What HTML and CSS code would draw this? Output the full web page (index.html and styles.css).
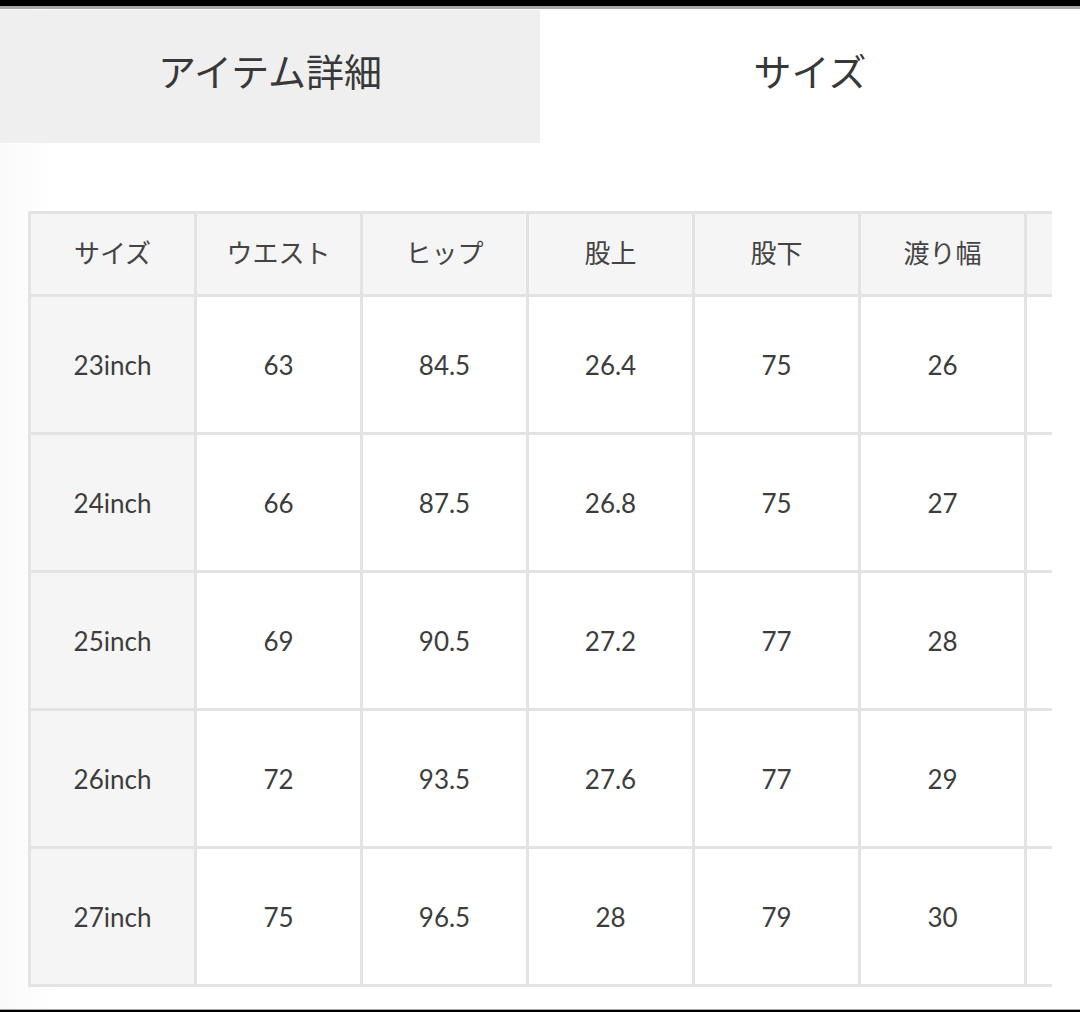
FILE: index.html
```html
<!DOCTYPE html>
<html lang="ja">
<head>
<meta charset="utf-8">
<link rel="stylesheet" href="styles.css">
</head>
<body>
<div class="page">
  <div class="topbar"></div>
  <div class="tabs">
    <div class="tab tab-inactive">アイテム詳細</div>
    <div class="tab tab-active">サイズ</div>
  </div>
  <div class="table-wrap">
    <table class="size-table">
      <colgroup>
        <col class="c"><col class="c"><col class="c"><col class="c"><col class="c"><col class="c"><col class="c">
      </colgroup>
      <thead>
        <tr class="head-row">
          <th>サイズ</th><th>ウエスト</th><th>ヒップ</th><th>股上</th><th>股下</th><th>渡り幅</th><th></th>
        </tr>
      </thead>
      <tbody>
        <tr><th>23inch</th><td>63</td><td>84.5</td><td>26.4</td><td>75</td><td>26</td><td></td></tr>
        <tr><th>24inch</th><td>66</td><td>87.5</td><td>26.8</td><td>75</td><td>27</td><td></td></tr>
        <tr><th>25inch</th><td>69</td><td>90.5</td><td>27.2</td><td>77</td><td>28</td><td></td></tr>
        <tr><th>26inch</th><td>72</td><td>93.5</td><td>27.6</td><td>77</td><td>29</td><td></td></tr>
        <tr><th>27inch</th><td>75</td><td>96.5</td><td>28</td><td>79</td><td>30</td><td></td></tr>
      </tbody>
    </table>
  </div>
  <div class="spacer"></div>
  <div class="bottombar"></div>
</div>
</body>
</html>
```
FILE: styles.css
```css
html, body {
  margin: 0;
  padding: 0;
}
body {
  background: #fff;
  font-family: "Lato", "Noto Sans CJK JP", sans-serif;
  color: #3a3a3a;
}
.page {
  height: 1012px;
  display: flex;
  flex-direction: column;
  background: linear-gradient(to right, #fafafa 0, #fdfdfd 40px, #fff 55px);
  overflow: hidden;
}
.topbar {
  height: 6px;
  background: #000;
  border-bottom: 3px solid #a9a9a9;
  flex: none;
}
.tabs {
  display: flex;
  height: 133px;
  margin-top: 1px;
  flex: none;
}
.tab {
  display: flex;
  align-items: center;
  justify-content: center;
  font-family: "Noto Sans CJK JP", sans-serif;
  font-size: 38px;
  color: #383838;
  padding-bottom: 14px;
  box-sizing: border-box;
}
.tab-inactive {
  width: 540px;
  background: #efefef;
}
.tab-active {
  flex: 1;
  background: #fff;
}
.table-wrap {
  margin-top: 68px;
  margin-left: 28px;
  width: 1024px;
  overflow: hidden;
  flex: none;
}
.size-table {
  border-collapse: collapse;
  table-layout: fixed;
  width: 1164px;
}
.size-table col.c {
  width: 166px;
}
.size-table th,
.size-table td {
  border: 3px solid #e3e3e3;
  text-align: center;
  vertical-align: middle;
  font-weight: normal;
  font-size: 26px;
  color: #3d3d3d;
  padding: 0;
}
.size-table thead th {
  background: #f5f5f5;
  font-family: "Noto Sans CJK JP", sans-serif;
  font-size: 26px;
  color: #444;
  padding-bottom: 6px;
}
.head-row {
  height: 83px;
}
.size-table tbody tr {
  height: 138px;
}
.size-table tbody th {
  background: #f5f5f5;
}
.size-table td {
  background: #fff;
}
.spacer {
  flex: 1;
}
.bottombar {
  height: 2px;
  border-top: 1px solid #a9a9a9;
  background: #000;
  flex: none;
}
```
